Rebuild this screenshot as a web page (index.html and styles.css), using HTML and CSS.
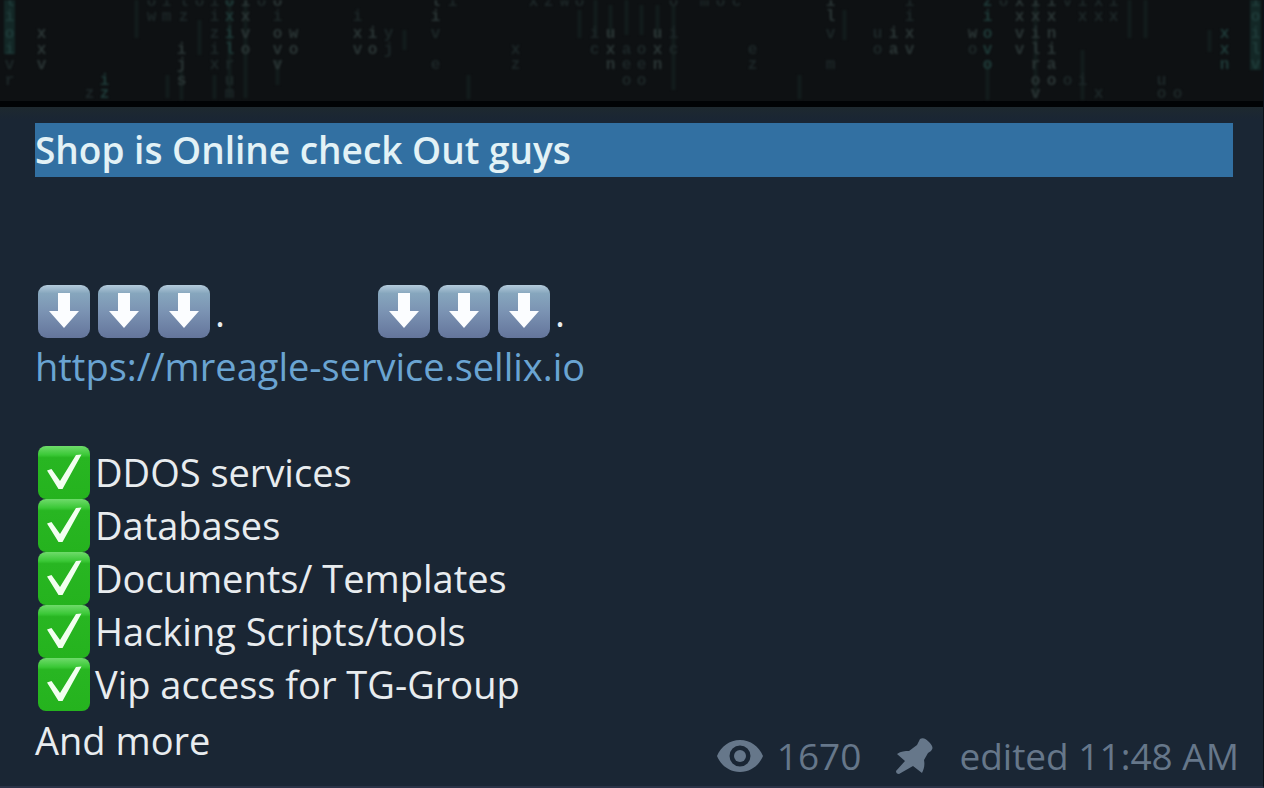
FILE: index.html
```html
<!DOCTYPE html>
<html lang="en">
<head>
<meta charset="utf-8">
<title>Channel message</title>
<link rel="stylesheet" href="styles.css">
</head>
<body>
<svg class="defs" aria-hidden="true">
  <defs>
    <linearGradient id="slate" x1="0" y1="0" x2="0" y2="1">
      <stop offset="0" stop-color="#b4cbdc"/>
      <stop offset=".16" stop-color="#86a6bd"/>
      <stop offset=".5" stop-color="#7b93b3"/>
      <stop offset="1" stop-color="#64759b"/>
    </linearGradient>
    <linearGradient id="green" x1="0" y1="0" x2="0" y2="1">
      <stop offset="0" stop-color="#6fdb6b"/>
      <stop offset=".17" stop-color="#3ac836"/>
      <stop offset=".22" stop-color="#28b622"/>
      <stop offset="1" stop-color="#25b31e"/>
    </linearGradient>
    <symbol id="down" viewBox="0 0 52 53">
      <rect width="52" height="53" rx="9" fill="url(#slate)"/>
      <path d="M20 8h12v18h9L26 43 11 26h9z" fill="#fbfdff"/>
    </symbol>
    <symbol id="check" viewBox="0 0 52 53">
      <rect width="52" height="53" rx="8" fill="url(#green)"/>
      <path d="M9 24.500l4.500-1.500 8.500 12L38 9l5.500-.5L24.500 43h-4z" fill="#f2fff0"/>
    </symbol>
  </defs>
</svg>

<main class="message">
  <header class="photo">
    <svg class="rain" viewBox="0 0 1264 101" preserveAspectRatio="xMidYMax slice" aria-hidden="true">
      <g class="streaks">
        <path d="M137 0v38M168 75v23M182 72v28M200 20v35M215 75v24M230 0v98M246 0v98M278 60v25M405 30v20M580 10v28M596 0v35M611 5v30M627 0v35M642 5v30M658 5v30M674 5v85M469 75v24M800 75v24M845 10v30M988 60v40M1036 0v98M1083 50v50M1130 0v38M1146 0v38M1210 30v22"/>
      </g>
      <g class="teal">
        <path d="M10 0v54M1256 0v70"/>
        <text x="10 10 10 10" y="6 21 38 54">lioi</text>
        <text x="1256 1256 1256 1256 1256" y="6 21 38 54 69">ioilv</text>
        <text x="230 230 230 230" y="6 21 38 54">oxil</text>
        <text x="1225 1225 1225" y="38 54 69">xxn</text>
        <text x="988 988 988 988 988" y="6 21 38 54 69">ziovo</text>
        <text x="105 105" y="85 98">iz</text>
      </g>
      <g class="grey">
        <text x="42 42 42" y="38 54 69">xxv</text>
        <text x="294 294" y="38 54">wo</text>
        <text x="358 358" y="38 54">xv</text>
        <text x="373 373" y="38 54">io</text>
        <text x="973" y="38">w</text>
        <text x="894 894" y="38 54">ia</text>
        <text x="910 910" y="38 54">xv</text>
        <text x="831 831" y="6 21">il</text>
        <text x="436 436" y="6 21">li</text>
        <text x="246 246 246 246" y="6 21 38 54">ixvo</text>
        <text x="278 278 278 278" y="6 38 54 69">oovv</text>
        <text x="611 611 611" y="38 54 69">uxn</text>
        <text x="658 658 658" y="38 54 69">uxn</text>
        <text x="1020 1020 1020 1020" y="6 21 38 54">xxvv</text>
        <text x="1036 1036 1036 1036 1036 1036 1036" y="6 21 38 54 69 85 98">ixilrov</text>
        <text x="1052 1052 1052 1052 1052 1052" y="6 21 38 54 69 85">ixniao</text>
        <text x="182 182 182" y="54 69 85">ijs</text>
      </g>
      <g class="faint">
        <text x="10 10" y="69 85">vr</text>
        <text x="90" y="98">z</text>
        <text x="152 167 184 200 262" y="6 6 6 6 6">oiloo</text>
        <text x="152 167 184 278 358" y="21 21 21 21 21">wmzii</text>
        <text x="215 215 215 215" y="6 21 38 54">iizi</text>
        <text x="215 230 230 230" y="69 69 85 98">xrum</text>
        <text x="389 389" y="38 54">yj</text>
        <text x="453 436 436" y="6 38 69">ive</text>
        <text x="516 516" y="54 69">xz</text>
        <text x="534 549 565 580 674" y="6 6 6 6 6">xzwoo</text>
        <text x="595 595" y="38 54">ic</text>
        <text x="627 627 627" y="54 69 85">aeo</text>
        <text x="642 642 642" y="54 69 85">oeo</text>
        <text x="674 674" y="38 54">ic</text>
        <text x="705 721 737" y="6 6 6">moc</text>
        <text x="753 753" y="54 69">ez</text>
        <text x="831 831" y="38 69">vm</text>
        <text x="878 878 910 910" y="38 54 6 21">uoii</text>
        <text x="973 1004 1068 1083 1099 1114" y="54 6 6 6 6 6">oovixi</text>
        <text x="1083 1099 1114" y="21 21 21">xxx</text>
        <text x="1068 1083 1099" y="85 85 98">oix</text>
        <text x="1162 1162 1178" y="85 98 98">uoo</text>
      </g>
    </svg>
  </header>

  <article class="body">
    <h1 class="title">Shop is Online check Out guys</h1>
    <p class="arrows">
      <span class="group"><svg class="emoji" role="img" aria-label="Down"><use href="#down"/></svg><svg class="emoji" role="img" aria-label="Down"><use href="#down"/></svg><svg class="emoji" role="img" aria-label="Down"><use href="#down"/></svg>.</span>
      <span class="group"><svg class="emoji" role="img" aria-label="Down"><use href="#down"/></svg><svg class="emoji" role="img" aria-label="Down"><use href="#down"/></svg><svg class="emoji" role="img" aria-label="Down"><use href="#down"/></svg>.</span>
    </p>
    <a class="link" href="https://mreagle-service.sellix.io">https://mreagle-service.sellix.io</a>
    <ul class="offers">
      <li><svg class="emoji" aria-hidden="true"><use href="#check"/></svg>DDOS services</li>
      <li><svg class="emoji" aria-hidden="true"><use href="#check"/></svg>Databases</li>
      <li><svg class="emoji" aria-hidden="true"><use href="#check"/></svg>Documents/ Templates</li>
      <li><svg class="emoji" aria-hidden="true"><use href="#check"/></svg>Hacking Scripts/tools</li>
      <li><svg class="emoji" aria-hidden="true"><use href="#check"/></svg>Vip access for TG-Group</li>
    </ul>
  </article>

  <footer class="footer">
    <p class="more">And more</p>
    <div class="meta">
      <svg class="eye" viewBox="0 0 46 32" role="img" aria-label="Views"><path fill-rule="evenodd" d="M23 0C12.500 0 4 6.500 0 16c4 9.500 12.500 16 23 16s19-6.500 23-16C42 6.500 33.500 0 23 0zm0 5.500a10.500 10.500 0 1 1 0 21 10.500 10.500 0 0 1 0-21z"/><circle cx="23" cy="16" r="6"/></svg>
      <span class="views">1670</span>
      <svg class="pin" viewBox="0 0 38 36" role="img" aria-label="Pinned"><path d="M25 1c3-2 6 0 9 3s5 6 2 9l-3 2-4 7c1 5 0 9-2 13l-9-7L4 36c-2 0-3-1-3-3l9-10-8-7c4-3 8-3 12-3l8-6z"/></svg>
      <span>edited 11:48 AM</span>
    </div>
  </footer>
</main>
</body>
</html>
```
FILE: styles.css
```css
* {
  box-sizing: border-box;
}

body {
  margin: 0;
  background: #1a2634;
  color: #e8ecef;
  font-family: "Open Sans", "Noto Sans", sans-serif;
  font-size: 38px;
  line-height: 54px;
}

h1,
p,
ul {
  margin: 0;
  padding: 0;
}

.defs {
  position: absolute;
  width: 0;
  height: 0;
}

.message {
  display: flex;
  flex-direction: column;
  min-height: 100vh;
  border-right: 1px solid #0b1118;
  border-bottom: 2px solid #2a3347;
}

.photo {
  background: #0e1113;
  border-bottom: 6px solid #010305;
}

.rain {
  display: block;
  width: 100%;
  height: 101px;
  font-family: "Liberation Mono", monospace;
  font-size: 16px;
  font-weight: 700;
  text-anchor: middle;
  filter: blur(1px);
}

.rain path {
  fill: none;
}

.streaks {
  stroke: #131c1c;
  stroke-width: 4;
}

.teal {
  fill: #1f3b39;
  stroke: none;
}

.teal path {
  stroke: #132726;
  stroke-width: 11;
}

.grey {
  fill: #2b3636;
}

.faint {
  fill: #1d2728;
}

.body {
  display: flex;
  flex-direction: column;
  align-items: flex-start;
  padding: 16px 30px 0 35px;
  background: linear-gradient(#1e292f, #1a2634 12px);
}

.title {
  align-self: stretch;
  background: #3270a2;
  color: #e3f2f6;
  font-size: 37px;
  font-weight: 600;
}

.arrows {
  display: flex;
  gap: 150px;
  margin-top: 108px;
}

.group {
  display: flex;
}

.emoji {
  flex: none;
  width: 52px;
  height: 53px;
  margin: 0 5px 0 3px;
}

.link {
  color: #6aa4d2;
  text-decoration: none;
}

.offers {
  margin-top: 53px;
  line-height: 53px;
  list-style: none;
}

.offers li {
  display: flex;
}

.footer {
  display: flex;
  justify-content: space-between;
  padding: 2px 24px 0 35px;
}

.meta {
  display: flex;
  align-items: center;
  padding-top: 16px;
  color: #66778a;
  font-size: 37px;
}

.eye {
  width: 46px;
  height: 32px;
  fill: currentColor;
}

.pin {
  width: 38px;
  height: 36px;
  fill: currentColor;
}

.views {
  margin: 0 34px 0 14px;
}

.pin + span {
  margin-left: 26px;
}
```
